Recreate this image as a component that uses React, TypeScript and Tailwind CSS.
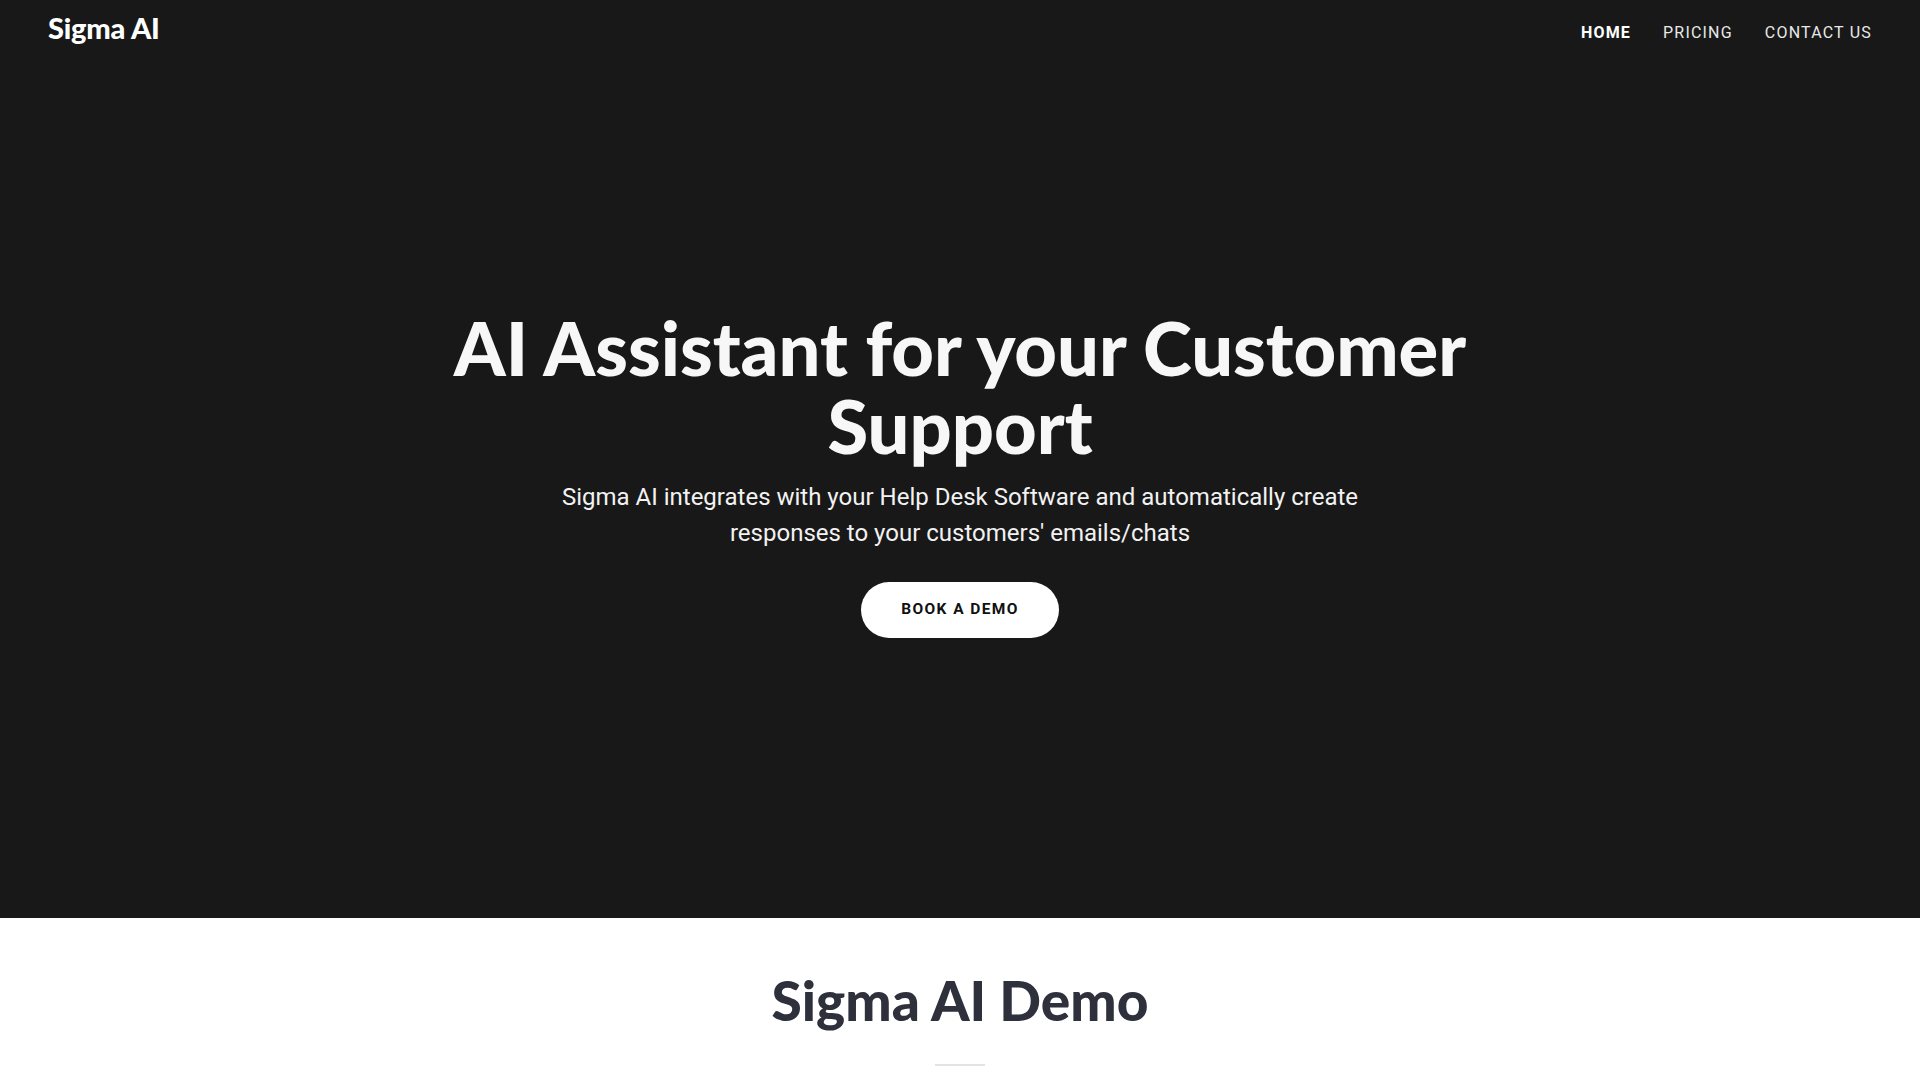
import React from 'react';

const navLinks = [
  { label: 'HOME', active: true },
  { label: 'PRICING', active: false },
  { label: 'CONTACT US', active: false },
];

const App: React.FC = () => {
  return (
    <div className="min-h-screen bg-white" style={{ fontFamily: 'Roboto, "Liberation Sans", sans-serif' }}>
      {/* Hero */}
      <section className="h-[918px] bg-[#181818] flex flex-col">
        <header className="flex items-start justify-between pl-[48px] pr-[32px] pt-[6px]">
          <a href="#" className="text-[29px] font-black text-white tracking-[-0.2px]" style={{ fontFamily: 'Lato, "Liberation Sans", sans-serif' }}>
            Sigma AI
          </a>
          <nav className="flex items-center pt-[15px]">
            {navLinks.map(link => (
              <a
                key={link.label}
                href="#"
                className={`px-[16px] text-[16px] tracking-[1.2px] ${link.active ? 'font-bold text-white' : 'font-normal text-[#e8e8e8]'}`}
              >
                {link.label}
              </a>
            ))}
          </nav>
        </header>

        <div className="flex flex-col items-center text-center pt-[259px]">
          <h1
            className="text-[74px] leading-[78px] font-black text-[#f7f7f7] max-w-[1100px]"
            style={{ fontFamily: 'Lato, "Liberation Sans", sans-serif' }}
          >
            AI Assistant for your Customer Support
          </h1>
          <p className="mt-[14px] text-[24px] leading-[36px] text-[#f2f2f2] max-w-[840px]">
            Sigma AI integrates with your Help Desk Software and automatically create responses to your customers' emails/chats
          </p>
          <button className="mt-[31px] h-[56px] w-[198px] rounded-full bg-white text-[15.5px] font-bold tracking-[1.4px] text-[#111]">
            BOOK A DEMO
          </button>
        </div>
      </section>

      {/* Demo */}
      <section className="flex flex-col items-center pt-[47px]">
        <h2
          className="text-[55px] leading-[70px] font-black text-[#2e303c]"
          style={{ fontFamily: 'Lato, "Liberation Sans", sans-serif' }}
        >
          Sigma AI Demo
        </h2>
        <div className="mt-[29px] h-[2px] w-[50px] bg-[#e3e3e3]" />
      </section>
    </div>
  );
};

export default App;
